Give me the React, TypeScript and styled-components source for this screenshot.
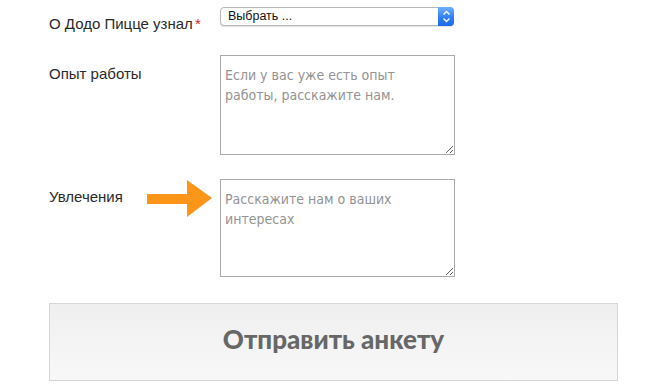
import { createGlobalStyle, styled } from 'styled-components';

const Global = createGlobalStyle`
  html, body {
    margin: 0;
    padding: 0;
    background: #fff;
  }
`;

const Form = styled.form`
  width: 650px;
  height: 387px;
  padding: 7px 0 0 49px;
  box-sizing: border-box;
  font-family: "Liberation Sans", Arial, sans-serif;
  color: #333;
  overflow: hidden;
`;

const Row = styled.div<{ $gap?: number }>`
  display: grid;
  grid-template-columns: 171px 235px;
  align-items: start;
  margin-bottom: ${(p) => p.$gap ?? 0}px;
`;

const Label = styled.label<{ $top: number }>`
  position: relative;
  padding-top: ${(p) => p.$top}px;
  font-size: 15px;
  line-height: 18px;
  color: #2a2a2a;
`;

const Star = styled.span`
  color: #e2231a;
  margin-left: 2px;
`;

const Select = styled.div`
  position: relative;
  width: 225px;
  height: 17px;
  border: 1px solid #b8b8b8;
  border-radius: 4px;
  background: #fff;
  box-shadow: 0 1px 1px rgba(0, 0, 0, 0.12);
  font-size: 12.5px;
  line-height: 17px;
  color: #111;
  padding-left: 7px;
  box-sizing: content-box;
`;

const SelectButton = styled.span`
  position: absolute;
  top: -1px;
  right: -1px;
  width: 16px;
  height: 19px;
  border-radius: 0 4px 4px 0;
  background: linear-gradient(#6fb0ff, #2a7cf3 60%, #1d6ee6);
  display: flex;
  align-items: center;
  justify-content: center;
`;

const Area = styled.textarea<{ $h: number }>`
  width: 235px;
  height: ${(p) => p.$h}px;
  box-sizing: border-box;
  margin: 0;
  border: 1px solid #aaa;
  padding: 9px 4px;
  font-family: "DejaVu Sans Condensed", "DejaVu Sans", Tahoma, sans-serif;
  font-stretch: condensed;
  font-size: 14px;
  line-height: 20px;
  color: #333;
  display: block;
  &::placeholder {
    color: #939393;
  }
`;

const Arrow = styled.svg`
  position: absolute;
  left: 98px;
  top: 1px;
`;

const Submit = styled.button`
  display: block;
  width: 569px;
  height: 78px;
  border: 1px solid #d6d6d6;
  background: linear-gradient(#efefef, #f8f8f8);
  font-family: "Lato", "Open Sans", sans-serif;
  font-weight: 900;
  font-size: 26px;
  color: #676767;
  cursor: pointer;
  padding: 0 0 6px;
`;

export default function App() {
  return (
    <>
      <Global />
      <Form>
        <Row $gap={22}>
          <Label $top={8}>
            О Додо Пицце узнал<Star>*</Star>
          </Label>
          <Select>
            Выбрать ...
            <SelectButton>
              <svg width="9" height="13" viewBox="0 0 9 13">
                <path d="M1.5 4.5 L4.5 1.5 L7.5 4.5 M1.5 8.5 L4.5 11.5 L7.5 8.5" fill="none" stroke="#fff" strokeWidth="1.4" />
              </svg>
            </SelectButton>
          </Select>
        </Row>
        <Row $gap={24}>
          <Label $top={10}>Опыт работы</Label>
          <Area $h={100} placeholder="Если у вас уже есть опыт работы, расскажите нам." />
        </Row>
        <Row $gap={26}>
          <Label $top={9}>
            Увлечения
            <Arrow width="66" height="37" viewBox="0 0 66 37">
              <path d="M0 14 H40 V0 L65 18 L40 37 V24 H0 Z" fill="#fb9618" />
            </Arrow>
          </Label>
          <Area $h={98} placeholder="Расскажите нам о ваших интересах" />
        </Row>
        <Submit type="button">Отправить анкету</Submit>
      </Form>
    </>
  );
}
